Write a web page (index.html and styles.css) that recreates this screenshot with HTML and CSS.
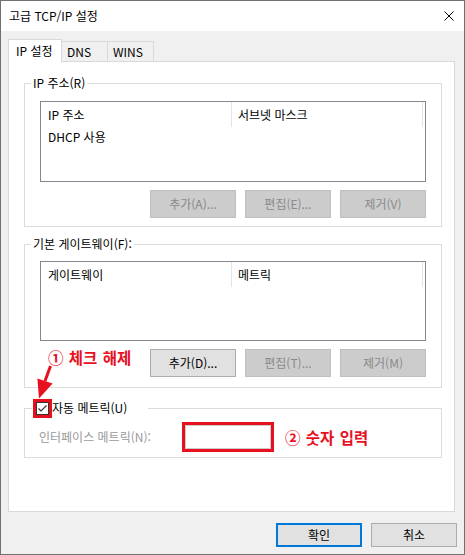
FILE: index.html
```html
<!DOCTYPE html>
<html lang="ko">
<head>
<meta charset="utf-8">
<title>고급 TCP/IP 설정</title>
<link rel="stylesheet" href="styles.css">
</head>
<body>
<div class="window">
  <div class="titlebar">
    <span class="title">고급 TCP/IP 설정</span>
    <svg class="close" width="10" height="10" viewBox="0 0 10 10"><path d="M0.5 0.5L9.5 9.5M9.5 0.5L0.5 9.5" stroke="#000" stroke-width="1" fill="none"/></svg>
  </div>
  <div class="body">
    <div class="tabs">
      <div class="tab active">IP 설정</div>
      <div class="tab">DNS</div>
      <div class="tab">WINS</div>
    </div>
    <div class="panel">
      <fieldset class="group g1">
        <legend class="glabel">IP 주소(R)</legend>
        <div class="list l1">
          <div class="list-head"><div class="col">IP 주소</div><div class="col">서브넷 마스크</div></div>
          <div class="list-row"><div class="cell">DHCP 사용</div></div>
        </div>
        <div class="btn-row">
          <button class="btn" disabled>추가(A)...</button>
          <button class="btn" disabled>편집(E)...</button>
          <button class="btn" disabled>제거(V)</button>
        </div>
      </fieldset>
      <fieldset class="group g2">
        <legend class="glabel">기본 게이트웨이(F):</legend>
        <div class="list l2">
          <div class="list-head"><div class="col">게이트웨이</div><div class="col">메트릭</div></div>
        </div>
        <div class="btn-row">
          <span class="note note1">① 체크 해제</span>
          <button class="btn">추가(D)...</button>
          <button class="btn" disabled>편집(T)...</button>
          <button class="btn" disabled>제거(M)</button>
        </div>
      </fieldset>
      <fieldset class="group g3">
        <legend class="chklabel"><span class="checkbox"><svg width="11" height="11" viewBox="0 0 11 11"><path d="M1.5 5.5L4 8L9.5 2.5" stroke="#333" stroke-width="1.2" fill="none"/></svg></span><span class="chktext">자동 메트릭(U)</span></legend>
        <div class="metric-row">
          <span class="dim">인터페이스 메트릭(N):</span>
          <span class="textbox"></span>
          <span class="note note2">② 숫자 입력</span>
        </div>
      </fieldset>
    </div>
    <div class="footer">
      <button class="btn small default">확인</button>
      <button class="btn small">취소</button>
    </div>
  </div>
  <svg class="arrow" width="30" height="40" viewBox="0 0 30 40"><path d="M19.5 5L14 20" stroke="#e8101f" stroke-width="3" fill="none"/><polygon points="6.4,17.5 21.6,22.5 8,37.5" fill="#e8101f"/></svg>
</div>
</body>
</html>
```
FILE: styles.css
```css
html, body {
  margin: 0;
  padding: 0;
  background: #fff;
}
body {
  font-family: "Noto Sans CJK KR", "Noto Sans", sans-serif;
  font-size: 12px;
  color: #000;
}
.window {
  position: relative;
  width: 465px;
  height: 555px;
  box-sizing: border-box;
  border: 1px solid #707070;
  background: #f0f0f0;
}
.titlebar {
  height: 30px;
  background: #fff;
  display: flex;
  align-items: center;
  justify-content: space-between;
  padding: 0 10px 0 8px;
}
.title {
  line-height: 16px;
}
.body {
  padding: 8px 0 0 7px;
}
.tabs {
  display: flex;
  align-items: flex-end;
  height: 22px;
}
.tab {
  box-sizing: border-box;
  height: 20px;
  width: 46px;
  border: 1px solid #d9d9d9;
  border-left: none;
  border-bottom: none;
  background: #f0f0f0;
  padding-left: 5px;
  line-height: 19px;
}
.tab.active {
  position: relative;
  z-index: 1;
  height: 23px;
  width: 54px;
  margin-bottom: -1px;
  border-left: 1px solid #d9d9d9;
  background: #fff;
  padding-left: 7px;
  line-height: 22px;
}
.panel {
  box-sizing: border-box;
  width: 447px;
  height: 451px;
  border: 1px solid #d9d9d9;
  background: #fff;
  padding-left: 15px;
}
.group {
  box-sizing: border-box;
  width: 418px;
  margin: 0;
  border: 1px solid #dcdcdc;
  padding: 10px 15px 8px;
  min-width: 0;
}
.glabel {
  padding: 0 2px;
  margin-left: -9px;
  line-height: 16px;
}
.g1 { margin-top: 13px; }
.g2 { margin-top: 9px; padding-top: 9px; padding-bottom: 10px; }
.g3 { margin-top: 10px; padding: 7px 14px 8px; }
.list {
  box-sizing: border-box;
  border: 1px solid #828790;
  background: #fff;
}
.l1 { height: 81px; }
.l2 { height: 80px; }
.list-head {
  display: flex;
  height: 25px;
}
.col {
  box-sizing: border-box;
  width: 191px;
  border-right: 1px solid #e5e5e5;
  padding-left: 7px;
  line-height: 25px;
}
.col + .col { padding-left: 6px; }
.list-row {
  height: 20px;
  line-height: 20px;
  padding-left: 7px;
}
.btn-row {
  display: flex;
  justify-content: flex-end;
  gap: 9px;
  margin-top: 8px;
}
.btn {
  box-sizing: border-box;
  width: 86px;
  height: 28px;
  padding: 0;
  margin: 0;
  border: 1px solid #adadad;
  background: #e1e1e1;
  color: #000;
  font: inherit;
  line-height: 16px;
}
.btn:disabled {
  background: #cccccc;
  border-color: #bfbfbf;
  color: #8a8a8a;
}
.btn.small { height: 24px; }
.btn.default { border: 2px solid #0078d7; }
.note {
  color: #e8101f;
  font-weight: bold;
  font-size: 15.5px;
  line-height: 16px;
  word-spacing: 1px;
}
.note1 {
  align-self: flex-start;
  margin-left: 8px;
  margin-right: auto;
}
.chklabel {
  display: flex;
  align-items: center;
  height: 20px;
  margin-left: -7px;
  padding: 0 21px 0 4px;
  line-height: 20px;
}
.checkbox {
  box-sizing: border-box;
  width: 13px;
  height: 13px;
  border: 1px solid #333;
  background: #fff;
  outline: 3px solid #e8101f;
  display: flex;
}
.chktext { margin-left: 3px; }
.metric-row {
  display: flex;
  align-items: center;
}
.dim {
  width: 146px;
  color: #9a9a9a;
  line-height: 16px;
}
.textbox {
  box-sizing: border-box;
  width: 86px;
  height: 24px;
  border: 1px solid #cccccc;
  background: #fff;
  outline: 3px solid #e8101f;
}
.note2 { margin-left: 14px; }
.footer {
  display: flex;
  justify-content: flex-end;
  gap: 9px;
  margin-top: 11px;
  padding-right: 7px;
}
.arrow {
  position: absolute;
  left: 30px;
  top: 360px;
}
```
